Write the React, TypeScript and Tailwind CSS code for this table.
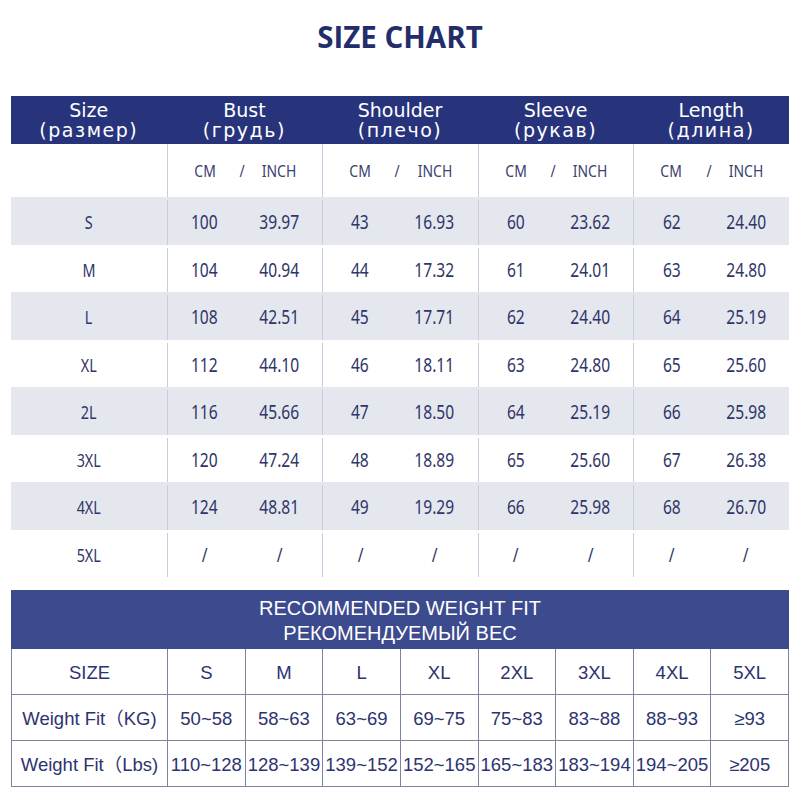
import React from 'react'

const columns = [
  { en: 'Size', ru: '(размер)' },
  { en: 'Bust', ru: '(грудь)' },
  { en: 'Shoulder', ru: '(плечо)' },
  { en: 'Sleeve', ru: '(рукав)' },
  { en: 'Length', ru: '(длина)' },
]

const rows = [
  ['S', '100', '39.97', '43', '16.93', '60', '23.62', '62', '24.40'],
  ['M', '104', '40.94', '44', '17.32', '61', '24.01', '63', '24.80'],
  ['L', '108', '42.51', '45', '17.71', '62', '24.40', '64', '25.19'],
  ['XL', '112', '44.10', '46', '18.11', '63', '24.80', '65', '25.60'],
  ['2L', '116', '45.66', '47', '18.50', '64', '25.19', '66', '25.98'],
  ['3XL', '120', '47.24', '48', '18.89', '65', '25.60', '67', '26.38'],
  ['4XL', '124', '48.81', '49', '19.29', '66', '25.98', '68', '26.70'],
  ['5XL', '/', '/', '/', '/', '/', '/', '/', '/'],
]

const weightRows = [
  ['SIZE', 'S', 'M', 'L', 'XL', '2XL', '3XL', '4XL', '5XL'],
  ['Weight Fit（KG)', '50~58', '58~63', '63~69', '69~75', '75~83', '83~88', '88~93', '≥93'],
  ['Weight Fit（Lbs)', '110~128', '128~139', '139~152', '152~165', '165~183', '183~194', '194~205', '≥205'],
]

// no condensed face installed, so squeeze the figures a little
function Narrow({ children }: { children: React.ReactNode }) {
  return <span className="inline-block scale-x-[0.82]">{children}</span>
}

function Pair({ a, b }: { a: string; b: string }) {
  return (
    <div className="flex h-full items-center border-l-[1.5px] border-[#c9ccdc] pr-[6px]">
      <div className="flex-1 text-center"><Narrow>{a}</Narrow></div>
      <div className="flex-1 text-center"><Narrow>{b}</Narrow></div>
    </div>
  )
}

export default function App() {
  return (
    <div className="h-[800px] w-[800px] bg-white">
      <div className="h-[96px] pt-[22px]">
        <h1 className="text-center font-['Open_Sans',sans-serif] text-[29.5px] font-bold leading-[29px] text-[#232d6c]">
          SIZE CHART
        </h1>
      </div>

      <div className="mx-[11px] w-[778px]">
        <div className="grid h-[48px] grid-cols-5 bg-[#27347b] font-['DejaVu_Sans',sans-serif] text-[19px] leading-[20px] text-white">
          {columns.map((c) => (
            <div key={c.en} className="flex flex-col items-center justify-center">
              <span>{c.en}</span>
              <span className="tracking-[0.08em]">{c.ru}</span>
            </div>
          ))}
        </div>

        <div className="grid h-[53px] grid-cols-5 font-['Noto_Sans',sans-serif] text-[17px] text-[#3c4270]">
          <div />
          {[0, 1, 2, 3].map((i) => (
            <div key={i} className="flex h-full items-center border-l-[1.5px] border-[#c9ccdc] pr-[6px]">
              <div className="flex-1 text-center"><Narrow>CM</Narrow></div>
              <div className="flex w-0 justify-center"><Narrow>/</Narrow></div>
              <div className="flex-1 text-center"><Narrow>INCH</Narrow></div>
            </div>
          ))}
        </div>

        {rows.map((r, idx) => (
          <div
            key={r[0]}
            className={`grid h-[47.5px] grid-cols-5 font-['Noto_Sans',sans-serif] text-[19px] text-[#2f3567] ${
              idx % 2 === 0 ? 'bg-[#e5e7ef]' : 'bg-white'
            }`}
          >
            <div className="flex items-center justify-center pt-[3px] text-[17.5px]"><Narrow>{r[0]}</Narrow></div>
            <div className="pt-[3px]"><Pair a={r[1]} b={r[2]} /></div>
            <div className="pt-[3px]"><Pair a={r[3]} b={r[4]} /></div>
            <div className="pt-[3px]"><Pair a={r[5]} b={r[6]} /></div>
            <div className="pt-[3px]"><Pair a={r[7]} b={r[8]} /></div>
          </div>
        ))}
      </div>

      <div className="mx-[11px] mt-[13px] w-[778px] font-['Liberation_Sans','Noto_Sans_CJK_SC',sans-serif]">
        <div className="flex h-[59px] flex-col items-center justify-center bg-[#3c4a8e] pt-[3px] text-[20px] leading-[25px] text-white">
          <span>RECOMMENDED WEIGHT FIT</span>
          <span>РЕКОМЕНДУЕМЫЙ ВЕС</span>
        </div>
        <div className="border-l-[1.5px] border-[#7e839e]">
          {weightRows.map((r) => (
            <div key={r[0]} className="grid h-[46px] grid-cols-[156px_repeat(8,minmax(0,1fr))] text-[#2d3370]">
              {r.map((v, i) => (
                <div
                  key={i}
                  className="flex items-center justify-center whitespace-nowrap border-b-[1.5px] border-r-[1.5px] border-[#7e839e] pt-[2px] text-[18.5px]"
                >
                  {v}
                </div>
              ))}
            </div>
          ))}
        </div>
      </div>
    </div>
  )
}
